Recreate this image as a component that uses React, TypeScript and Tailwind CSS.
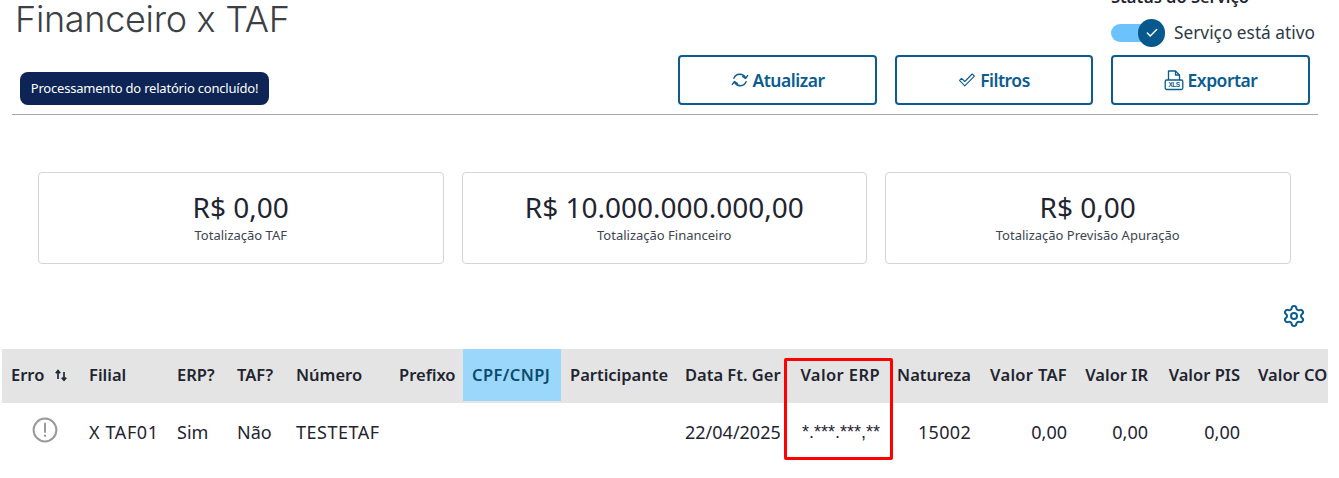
import { Check, Settings } from 'lucide-react';

const headers = [
  { label: 'Erro', cell: 'pl-[9px]' },
  { label: 'Filial', cell: 'pl-[9px]' },
  { label: 'ERP?', cell: 'pl-[9px]' },
  { label: 'TAF?', cell: 'pl-[9px]' },
  { label: 'Número', cell: 'pl-[9px]' },
  { label: 'Prefixo', cell: 'pl-[9px]' },
  { label: 'CPF/CNPJ', cell: 'pl-[9px] bg-[#9bd6fb] text-[#0c4a6e] tracking-[0.4px]' },
  { label: 'Participante', cell: 'pl-[9px]' },
  { label: 'Data Ft. Ger', cell: 'pl-[9px]' },
  { label: 'Valor ERP', cell: 'justify-end pr-[9px] tracking-[0.4px]' },
  { label: 'Natureza', cell: 'justify-end pr-[9px]' },
  { label: 'Valor TAF', cell: 'justify-end pr-[9px] tracking-[0.3px]' },
  { label: 'Valor IR', cell: 'justify-end pr-[9px]' },
  { label: 'Valor PIS', cell: 'justify-end pr-[9px]' },
  { label: 'Valor COFINS', cell: 'pl-[9px]' },
];

const row = [
  { value: '', cell: '' },
  { value: 'X TAF01', cell: 'pl-[9px] tracking-[0.6px]' },
  { value: 'Sim', cell: 'pl-[9px]' },
  { value: 'Não', cell: 'pl-[9px]' },
  { value: 'TESTETAF', cell: 'pl-[9px] tracking-[0.5px]' },
  { value: '', cell: '' },
  { value: '', cell: '' },
  { value: '', cell: '' },
  { value: '22/04/2025', cell: 'pl-[9px]' },
  { value: '*.***.***,**', cell: "justify-end pr-[9px] font-['Liberation_Sans',sans-serif]" },
  { value: '15002', cell: 'justify-end pr-[9px] tracking-[0.3px]' },
  { value: '0,00', cell: 'justify-end pr-[9px]' },
  { value: '0,00', cell: 'justify-end pr-[9px]' },
  { value: '0,00', cell: 'justify-end pr-[9px]' },
  { value: '', cell: '' },
];

const cards = [
  { value: 'R$ 0,00', label: 'Totalização TAF' },
  { value: 'R$ 10.000.000.000,00', label: 'Totalização Financeiro' },
  { value: 'R$ 0,00', label: 'Totalização Previsão Apuração' },
];

const gridCols =
  'grid grid-cols-[78px_88px_60px_59px_103px_73px_98px_115px_115px_98px_91px_96px_81px_92px_120px]';

const RefreshIcon = () => (
  <svg width="18" height="18" viewBox="0 0 18 18" fill="none" stroke="currentColor" strokeWidth="1.5" strokeLinecap="round" strokeLinejoin="round">
    <path d="M2.9 7.2A6.4 6.4 0 0 1 14.4 6.6" />
    <path d="M16.6 4.6 14.6 7.4 11.8 5.6" />
    <path d="M15.1 10.8A6.4 6.4 0 0 1 3.6 11.4" />
    <path d="M1.4 13.4 3.4 10.6 6.2 12.4" />
  </svg>
);

const FilterCheckIcon = () => (
  <svg width="18" height="16" viewBox="0 0 18 16" fill="none" stroke="currentColor" strokeWidth="1.1" strokeLinejoin="round">
    <path d="M1.5 8.4 3.6 6.3 6.8 9.5 14.2 2l2.2 2.1L6.8 13.8Z" />
  </svg>
);

const XlsIcon = () => (
  <svg width="20" height="22" viewBox="0 0 20 22" fill="none" stroke="currentColor" strokeWidth="1.3" strokeLinejoin="round">
    <path d="M4.5 11V2h7l4 4v5" />
    <path d="M11.5 2v4h4" />
    <rect x="1.2" y="11" width="17.6" height="9.5" rx="1.5" />
    <text x="10" y="18.2" textAnchor="middle" fontSize="6.5" fontWeight="700" stroke="none" fill="currentColor" fontFamily="'Liberation Sans', sans-serif">XLS</text>
  </svg>
);

const SortIcon = () => (
  <svg width="14" height="14" viewBox="0 0 14 14" fill="none" stroke="#1f2937" strokeWidth="1.7">
    <path d="M4 11V3M1.8 5.2 4 2.6l2.2 2.6" />
    <path d="M10 4v8M7.8 9.6l2.2 2.6 2.2-2.6" />
  </svg>
);

const ErrorIcon = () => (
  <svg width="26" height="26" viewBox="0 0 26 26" fill="none" stroke="#9a9a9a">
    <circle cx="13" cy="13" r="11.4" strokeWidth="2" />
    <path d="M13 6.5v8.5" strokeWidth="2" strokeLinecap="round" />
    <path d="M13 18.6v.4" strokeWidth="2.2" strokeLinecap="round" />
  </svg>
);

const ActionButton = ({ icon, label, width }: { icon: React.ReactNode; label: string; width: string }) => (
  <button className={`${width} flex h-[50px] items-center justify-center gap-1 rounded border-2 border-[#0b5c8f] bg-white text-[17.5px] font-semibold tracking-[-0.5px] text-[#0b5c8f]`}>
    {icon}
    {label}
  </button>
);

export default function App() {
  return (
    <div className="relative h-[478px] w-[1339px] overflow-hidden bg-white font-['Noto_Sans',sans-serif] text-[#1f2430]">
      {/* Header */}
      <div className="mx-[12px] flex h-[115px] w-[1306px] justify-between border-b border-[#a6a6a6]">
        <div className="pl-[3px]">
          <h1 className="mt-[-5px] h-[48px] font-['Inter',sans-serif] text-[36px] leading-[48px] font-light tracking-[-0.3px] text-[#3c3f45]">
            Financeiro x TAF
          </h1>
          <div className="mt-[29px] ml-[5px] flex h-[33px] w-[249px] items-center justify-center rounded-lg bg-[#0e2454] text-[13px] tracking-[-0.2px] whitespace-nowrap text-white">
            Processamento do relatório concluído!
          </div>
        </div>
        <div className="flex flex-col items-end pr-[8px]">
          <div className="mt-[-13px] w-[199px] text-[16.5px] leading-[20px] font-semibold">Status do Serviço</div>
          <div className="mt-[12px] flex h-[28px] w-[199px] items-center">
            <div className="relative h-[18px] w-[40px] shrink-0 rounded-full bg-[#6cc3fc]">
              <div className="absolute top-[-5px] right-[-14px] flex h-[28px] w-[27px] items-center justify-center rounded-full bg-[#07588d] text-white">
                <Check size={14} strokeWidth={2.5} />
              </div>
            </div>
            <span className="ml-[23px] text-[17.3px] whitespace-nowrap text-[#2d3a46]">Serviço está ativo</span>
          </div>
          <div className="mt-[8px] flex gap-[18px]">
            <ActionButton icon={<RefreshIcon />} label="Atualizar" width="w-[199px]" />
            <ActionButton icon={<FilterCheckIcon />} label="Filtros" width="w-[198px]" />
            <ActionButton icon={<XlsIcon />} label="Exportar" width="w-[199px]" />
          </div>
        </div>
      </div>

      {/* Totals */}
      <div className="mt-[57px] ml-[38px] flex gap-[18px]">
        {cards.map((card, i) => (
          <div key={i} className="flex h-[92px] w-[405.5px] flex-col items-center justify-center rounded-[4px] border border-[#d4d4d4] pb-[2px]">
            <div className="text-[28px] leading-[36px]">{card.value}</div>
            <div className="text-[13px] leading-[20px] text-[#3c4550]">{card.label}</div>
          </div>
        ))}
      </div>

      {/* Table */}
      <div className="mt-[40px] mr-[33px] flex justify-end text-[#0b5c8f]">
        <Settings size={24} strokeWidth={2} />
      </div>
      <div className="relative mt-[21px] ml-[2px] w-[1326px] overflow-hidden">
        <div className={`${gridCols} h-[54px] bg-[#e4e4e4] pb-[2px] text-[16.5px] font-semibold whitespace-nowrap`}>
          {headers.map((h, i) => (
            <div key={i} className={`flex items-center ${h.cell}`}>
              {h.label}
              {i === 0 && (
                <span className="ml-[10px]">
                  <SortIcon />
                </span>
              )}
            </div>
          ))}
        </div>
        <div className={`${gridCols} h-[58px] text-[18px] whitespace-nowrap`}>
          {row.map((c, i) => (
            <div key={i} className={`flex items-center ${c.cell}`}>
              {i === 0 ? (
                <span className="mb-[4px] ml-[30px]">
                  <ErrorIcon />
                </span>
              ) : (
                c.value
              )}
            </div>
          ))}
        </div>
        <div className="absolute top-[9px] left-[782px] h-[102px] w-[109px] rounded-[2px] border-[3px] border-[#ff0000]" />
      </div>
    </div>
  );
}
